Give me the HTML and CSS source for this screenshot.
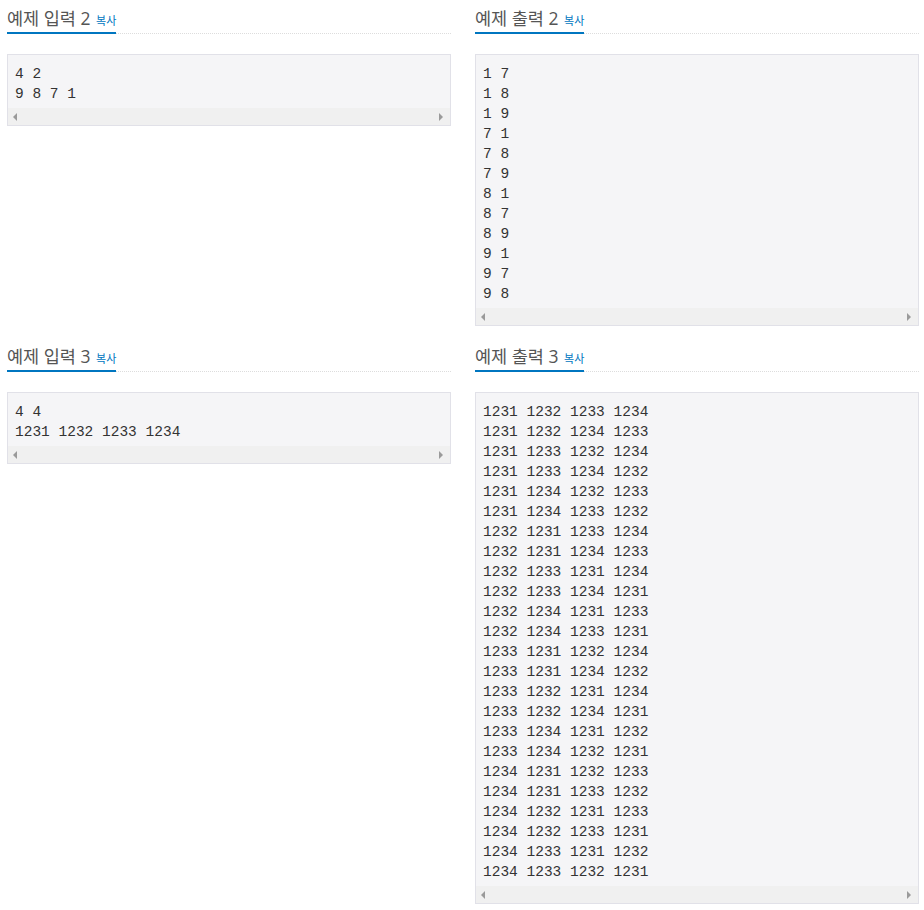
FILE: index.html
```html
<!DOCTYPE html>
<html lang="ko">
<head>
  <meta charset="UTF-8" />
  <title>예제</title>
  <link rel="stylesheet" href="styles.css">
</head>
<body>
  <div class="samples">
    <section class="sample">
      <div class="headline"><h2>예제 입력 2 <a class="copy" href="#">복사</a></h2></div>
      <div class="sample-box">
        <pre class="sampledata">4 2
9 8 7 1</pre>
        <div class="hscroll"><span class="arrow left"></span><span class="arrow right"></span></div>
      </div>
    </section>
    <section class="sample">
      <div class="headline"><h2>예제 출력 2 <a class="copy" href="#">복사</a></h2></div>
      <div class="sample-box">
        <pre class="sampledata">1 7
1 8
1 9
7 1
7 8
7 9
8 1
8 7
8 9
9 1
9 7
9 8</pre>
        <div class="hscroll"><span class="arrow left"></span><span class="arrow right"></span></div>
      </div>
    </section>
    <section class="sample">
      <div class="headline"><h2>예제 입력 3 <a class="copy" href="#">복사</a></h2></div>
      <div class="sample-box">
        <pre class="sampledata">4 4
1231 1232 1233 1234</pre>
        <div class="hscroll"><span class="arrow left"></span><span class="arrow right"></span></div>
      </div>
    </section>
    <section class="sample">
      <div class="headline"><h2>예제 출력 3 <a class="copy" href="#">복사</a></h2></div>
      <div class="sample-box">
        <pre class="sampledata">1231 1232 1233 1234
1231 1232 1234 1233
1231 1233 1232 1234
1231 1233 1234 1232
1231 1234 1232 1233
1231 1234 1233 1232
1232 1231 1233 1234
1232 1231 1234 1233
1232 1233 1231 1234
1232 1233 1234 1231
1232 1234 1231 1233
1232 1234 1233 1231
1233 1231 1232 1234
1233 1231 1234 1232
1233 1232 1231 1234
1233 1232 1234 1231
1233 1234 1231 1232
1233 1234 1232 1231
1234 1231 1232 1233
1234 1231 1233 1232
1234 1232 1231 1233
1234 1232 1233 1231
1234 1233 1231 1232
1234 1233 1232 1231</pre>
        <div class="hscroll"><span class="arrow left"></span><span class="arrow right"></span></div>
      </div>
    </section>
  </div>
</body>
</html>
```

FILE: styles.css
```css
body {
  margin: 0;
  padding: 6px 0 0 7px;
  background: #fff;
  font-family: "Open Sans", "Noto Sans CJK KR", sans-serif;
  color: #555;
}

.samples {
  display: grid;
  grid-template-columns: 444px 444px;
  column-gap: 24px;
  row-gap: 18px;
  align-items: start;
}

.headline {
  border-bottom: 1px dotted #ddd;
  margin-bottom: 20px;
}

.headline h2 {
  display: inline-block;
  height: 24px;
  margin: 0 0 -1px;
  padding-bottom: 2px;
  border-bottom: 2px solid #0076c0;
  font-size: 17.5px;
  font-weight: normal;
  line-height: 24px;
  color: #555;
}

.copy {
  font-size: 11px;
  line-height: 1;
  color: #0076c0;
  text-decoration: none;
  margin-left: 1px;
}

.sample-box {
  background: #f5f5f7;
  border: 1px solid #e1e1e8;
}

.sampledata {
  margin: 0;
  padding: 9px 7px 4px;
  font-family: "Liberation Mono", "Courier New", monospace;
  font-size: 14.5px;
  line-height: 20px;
  color: #333;
  overflow: hidden;
}

/* fake horizontal scrollbar (headless shots hide the real one) */
.hscroll {
  height: 17px;
  background: #f0f0f0;
  display: flex;
  align-items: center;
  justify-content: space-between;
  padding: 0 7px 0 5px;
}

.arrow {
  width: 0;
  height: 0;
  border-top: 4px solid transparent;
  border-bottom: 4px solid transparent;
}

.arrow.left {
  border-right: 4px solid #9a9a9a;
}

.arrow.right {
  border-left: 4px solid #9a9a9a;
}
```
